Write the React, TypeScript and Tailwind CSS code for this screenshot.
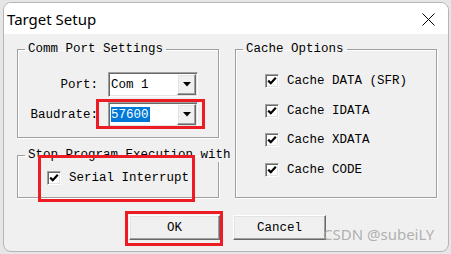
import React from 'react';

const mono = "font-['Liberation_Mono','Courier_New',monospace] text-[12.5px] leading-[14px] text-black";

const sunken =
  'border border-t-[#a0a0a0] border-l-[#a0a0a0] border-b-white border-r-white shadow-[inset_1px_1px_0_#696969,inset_-1px_-1px_0_#e3e3e3]';
const raised =
  'border border-t-white border-l-white border-b-[#696969] border-r-[#696969] shadow-[inset_-1px_-1px_0_#a0a0a0,inset_1px_1px_0_#e3e3e3]';

const groupBox =
  'border border-[#a0a0a0] shadow-[inset_1px_1px_0_#fff,1px_1px_0_#fff] min-w-0';

const Legend: React.FC<{ text: string }> = ({ text }) => (
  <legend className={`${mono} ml-[7px] px-[3px] whitespace-nowrap`}>{text}</legend>
);

const CheckBox: React.FC<{ label: string }> = ({ label }) => (
  <div className="flex items-center h-[16px] gap-[8px]">
    <span className={`w-[14px] h-[14px] bg-white flex items-center justify-center ${sunken}`}>
      <svg width="10" height="10" viewBox="0 0 10 10">
        <path d="M1.2 4.6 L3.8 7.2 L8.8 1.8" fill="none" stroke="#000" strokeWidth="2.2" />
      </svg>
    </span>
    <span className={`${mono} whitespace-pre`}>{label}</span>
  </div>
);

const Combo: React.FC<{ value: string; selected?: boolean }> = ({ value, selected }) => (
  <div className={`w-[90px] h-[25px] bg-white flex items-stretch p-[1px] ${sunken}`}>
    <div className="flex-1 flex items-center pl-[1px]">
      <span className={`${mono} whitespace-pre h-[15px] flex items-center pr-[1px] ${selected ? 'bg-[#0078d7] text-white' : ''}`}>
        {value}
      </span>
    </div>
    <div className={`w-[19px] bg-[#f0f0f0] flex items-center justify-center ${raised}`}>
      <svg width="8" height="5" viewBox="0 0 8 5">
        <path d="M0 0 H8 L4 4.5 Z" fill="#000" />
      </svg>
    </div>
  </div>
);

const Button: React.FC<{ label: string; w: string }> = ({ label, w }) => (
  <button className={`${w} h-[25px] bg-[#f0f0f0] flex items-center justify-center ${raised}`}>
    <span className={mono}>{label}</span>
  </button>
);

export default function App() {
  return (
    <div className="relative w-[451px] h-[254px] bg-[#e6e6e6] pt-[2px] pl-[3px] overflow-hidden">
      <div className="w-[446px] h-[250px] rounded-[8px] border border-[#b5b5b5] overflow-hidden bg-[#f0f0f0] flex flex-col">
        {/* title bar */}
        <div className="h-[31px] bg-white flex items-center justify-between pl-[3px] pr-[13px] shrink-0">
          <span className="font-['Noto_Sans','Open_Sans',sans-serif] text-[15px] text-black pt-[2px]">
            Target Setup
          </span>
          <svg width="13" height="13" viewBox="0 0 13 13" className="mt-[2px]">
            <path d="M0.5 0.5 L12.5 12.5 M12.5 0.5 L0.5 12.5" stroke="#000" strokeWidth="1" />
          </svg>
        </div>

        {/* body */}
        <div className="flex-1 pl-[13px] pt-[8px]">
          <div className="flex gap-[16px]">
            <div className="w-[202px] flex flex-col gap-[10px]">
              <fieldset className={`${groupBox} h-[96px]`}>
                <Legend text="Comm Port Settings" />
                <div className="flex flex-col gap-[5px] pt-[16px]">
                  <div className="flex items-center">
                    <span className={`${mono} w-[80px] text-right`}>Port:</span>
                    <span className="w-[10px]" />
                    <Combo value="Com 1" />
                  </div>
                  <div className="flex items-center">
                    <span className={`${mono} w-[80px] text-right`}>Baudrate:</span>
                    <span className="w-[10px]" />
                    <Combo value="57600" selected />
                  </div>
                </div>
              </fieldset>
              <fieldset className={`${groupBox} h-[50px]`}>
                <Legend text="Stop Program Execution with" />
                <div className="pt-[8px] pl-[29px]">
                  <CheckBox label="Serial Interrupt" />
                </div>
              </fieldset>
            </div>

            <fieldset className={`${groupBox} w-[202px] h-[156px]`}>
              <Legend text="Cache Options" />
              <div className="flex flex-col gap-[13.5px] pt-[17px] pl-[29px]">
                <CheckBox label="Cache DATA (SFR)" />
                <CheckBox label="Cache IDATA" />
                <CheckBox label="Cache XDATA" />
                <CheckBox label="Cache CODE" />
              </div>
            </fieldset>
          </div>

          <div className="flex gap-[13px] mt-[17px] ml-[112px]">
            <Button label="OK" w="w-[91px]" />
            <Button label="Cancel" w="w-[93px]" />
          </div>
        </div>
      </div>

      {/* annotation boxes */}
      <div className="absolute left-[96px] top-[99px] w-[109px] h-[30px] border-[3px] border-[#ed1c24]" />
      <div className="absolute left-[38px] top-[155px] w-[157px] h-[47px] border-[3px] border-[#ed1c24]" />
      <div className="absolute left-[125px] top-[211px] w-[98px] h-[35px] border-[3px] border-[#ed1c24]" />

      {/* watermark */}
      <span className="absolute left-[323px] top-[223px] font-['Noto_Sans','Liberation_Sans',sans-serif] text-[15px] leading-[22px] text-[#a8a8a8]/90">
        CSDN @subeiLY
      </span>
    </div>
  );
}
